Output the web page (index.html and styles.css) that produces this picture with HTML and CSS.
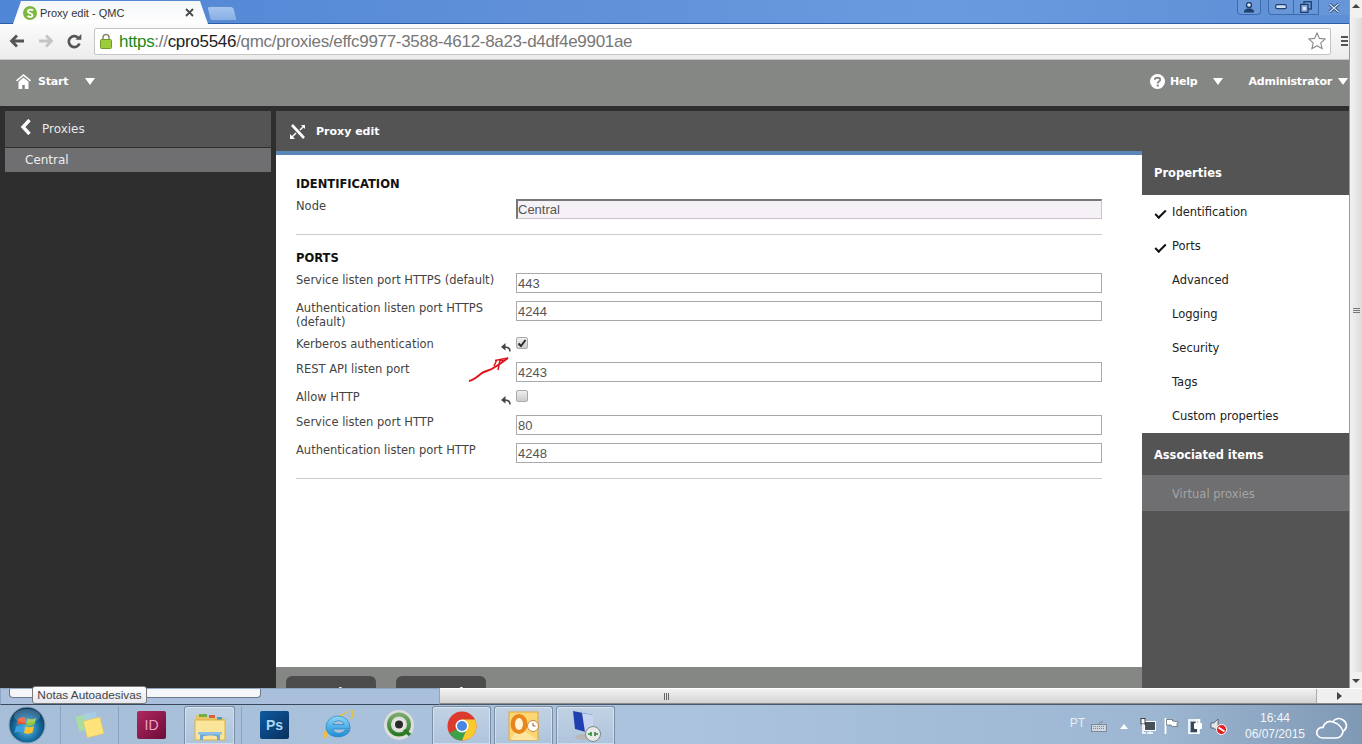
FILE: index.html
```html
<!DOCTYPE html>
<html lang="en">
<head>
<meta charset="utf-8">
<title>Proxy edit - QMC</title>
<link rel="stylesheet" href="styles.css">
</head>
<body>
<div class="upper">
  <div class="window">
    <div class="tabstrip">
      <div class="tab">
        <svg class="favicon" width="14" height="14" viewBox="0 0 14 14"><circle cx="7" cy="7" r="7" fill="#7cb83e"/><path d="M10 4.500C8.500 3 4.500 3.500 5 6c.4 1.500 4.500 1 4.500 3.200 0 2-3.500 2-5 .6" fill="none" stroke="#fff" stroke-width="1.800"/></svg>
        <span class="tab-title">Proxy edit - QMC</span>
        <svg class="tab-close" width="9" height="9" viewBox="0 0 9 9"><path d="M1 1l7 7M8 1L1 8" stroke="#4a4a4a" stroke-width="1.800"/></svg>
      </div>
      <div class="newtab"></div>
      <div class="winctl">
        <div class="winbtn user"><svg width="12" height="11" viewBox="0 0 12 11"><circle cx="6" cy="3" r="2.500" fill="#dce8f6" stroke="#1f3f6c" stroke-width="1.400"/><path d="M1 10.500h10V9C10 7 8 6.500 6 6.500S2 7 1 9z" fill="#1f3f6c"/></svg></div>
        <div class="winbtn min"><svg width="12" height="6" viewBox="0 0 12 6"><rect x=".7" y=".7" width="10.600" height="4" rx="1.500" fill="#cfe0f4" stroke="#1f3f6c" stroke-width="1.200"/></svg></div>
        <div class="winbtn rest"><svg width="12" height="12" viewBox="0 0 12 12"><rect x="4" y=".7" width="7.300" height="7.300" fill="none" stroke="#1f3f6c" stroke-width="1.300"/><rect x=".7" y="3.500" width="7.300" height="7.800" fill="#8fb0de" stroke="#1f3f6c" stroke-width="1.300"/><rect x="3" y="6" width="3" height="3" fill="#dce8f6"/></svg></div>
        <div class="winbtn close"><svg width="12" height="10" viewBox="0 0 12 10"><path d="M1.500 1l9 8M10.500 1l-9 8" stroke="#1f3f6c" stroke-width="3"/><path d="M1.500 1l9 8M10.500 1l-9 8" stroke="#dbe6f5" stroke-width="1.400"/></svg></div>
      </div>
    </div>
    <div class="toolbar">
      <svg class="nav" width="16" height="14" viewBox="0 0 16 14"><path d="M15 7H3M8 1.500L2.500 7 8 12.500" fill="none" stroke="#555" stroke-width="2.800"/></svg>
      <svg class="nav" width="16" height="14" viewBox="0 0 16 14"><path d="M1 7h12M8 1.500L13.500 7 8 12.500" fill="none" stroke="#c4c4c4" stroke-width="2.800"/></svg>
      <svg class="nav" width="15" height="15" viewBox="0 0 15 15"><path d="M12.500 9.500A5.500 5.500 0 1 1 11 3.500" fill="none" stroke="#555" stroke-width="2.600"/><path d="M8.500 5.800h5.800V0z" fill="#555"/></svg>
      <div class="omnibox">
        <svg class="lock" width="12" height="16" viewBox="0 0 12 16"><path d="M3 7V4.500a3 3 0 0 1 6 0V7" fill="none" stroke="#8a8a6c" stroke-width="1.500"/><rect x=".5" y="6.500" width="11" height="9" rx="1" fill="#9ccb3c" stroke="#6e9a28"/></svg>
        <span class="url"><span class="scheme">https</span><span class="dim">://</span>cpro5546<span class="dim">/qmc/proxies/effc9977-3588-4612-8a23-d4df4e9901ae</span></span>
        <svg class="star" width="18" height="18" viewBox="0 0 18 18"><path d="M9 1l2.400 5.400 5.800.6-4.400 3.900 1.300 5.800L9 13.700l-5.100 3 1.300-5.800L.8 7l5.800-.6z" fill="#fff" stroke="#8a8a8a" stroke-width="1.100"/></svg>
      </div>
      <div class="menu-bars"><i></i><i></i><i></i></div>
    </div>
    <header class="topbar">
      <svg class="home" width="15" height="15" viewBox="0 0 15 15"><path d="M7.500 0L0 6.200l1 1.200 6.500-5.300L14 7.400l1-1.200z" fill="#fff"/><path d="M7.500 3.600L2.500 7.700V15h3.700v-4h2.600v4h3.700V7.700z" fill="#fff"/></svg>
      <span class="top-label start">Start</span>
      <span class="caret caret-start"></span>
      <span class="spacer"></span>
      <svg class="help" width="15" height="15" viewBox="0 0 15 15"><circle cx="7.500" cy="7.500" r="7.500" fill="#fff"/><path d="M4.800 5.800C5 3 10.200 3 10.200 5.800c0 1.800-2.500 1.800-2.500 3.600" fill="none" stroke="#858784" stroke-width="1.900"/><rect x="6.700" y="10.600" width="2" height="2" fill="#858784"/></svg>
      <span class="top-label help-label">Help</span>
      <span class="caret caret-help"></span>
      <span class="top-label admin">Administrator</span>
      <span class="caret caret-admin"></span>
    </header>
    <div class="appbody">
      <aside class="left">
        <div class="left-head">
          <svg class="back-chevron" width="12" height="16" viewBox="0 0 12 16"><path d="M9.500 1L3 8l6.500 7" fill="none" stroke="#fff" stroke-width="3.400"/></svg>
          <span>Proxies</span>
        </div>
        <div class="left-item">Central</div>
      </aside>
      <main class="main">
        <div class="main-head">
          <svg width="16" height="15" viewBox="0 0 16 15"><path d="M2 1l12 13" stroke="#fff" stroke-width="2.600"/><path d="M10 6l4-4" stroke="#fff" stroke-width="1.400"/><path d="M11 1h4v4z" fill="#fff"/><path d="M6 9l-4 4" stroke="#fff" stroke-width="1.400"/><path d="M0 10l5 5H0z" fill="#fff"/></svg>
          <span>Proxy edit</span>
        </div>
        <div class="content">
          <div class="form">
            <h2 class="section">IDENTIFICATION</h2>
            <div class="row"><div class="lab">Node</div><div class="field readonly">Central</div></div>
            <hr class="rule rule-a">
            <h2 class="section">PORTS</h2>
            <div class="row"><div class="lab">Service listen port HTTPS (default)</div><div class="field">443</div></div>
            <div class="row tall"><div class="lab">Authentication listen port HTTPS (default)</div><div class="field">4244</div></div>
            <div class="row check-row"><div class="lab with-undo"><span>Kerberos authentication</span><svg class="undo" width="10" height="9" viewBox="0 0 10 9"><path d="M9 8.500C9 5 7 4 3.500 4" fill="none" stroke="#444" stroke-width="1.500"/><path d="M4.500 0L0 4l4.500 3.500z" fill="#444"/></svg></div><div class="box checked"><svg width="10" height="9" viewBox="0 0 10 9"><path d="M1.500 4.500L4 7l4.500-6" fill="none" stroke="#2c2c2c" stroke-width="2"/></svg></div></div>
            <div class="row"><div class="lab">REST API listen port</div><div class="field">4243</div></div>
            <div class="row check-row"><div class="lab with-undo"><span>Allow HTTP</span><svg class="undo" width="10" height="9" viewBox="0 0 10 9"><path d="M9 8.500C9 5 7 4 3.500 4" fill="none" stroke="#444" stroke-width="1.500"/><path d="M4.500 0L0 4l4.500 3.500z" fill="#444"/></svg></div><div class="box"></div></div>
            <div class="row"><div class="lab">Service listen port HTTP</div><div class="field">80</div></div>
            <div class="row"><div class="lab">Authentication listen port HTTP</div><div class="field">4248</div></div>
            <hr class="rule rule-b">
          </div>
          <svg class="redmark" width="44" height="32" viewBox="0 0 44 32"><path d="M1 29c5-1 9-5 13-8 4-2 9-3 13-6 5-3 9-6 13-9" fill="none" stroke="#e0141c" stroke-width="2"/><path d="M27 8.500L40 6M30 18l2-9.500M26 14l2.500-5.500M36 9l-4-1" fill="none" stroke="#e0141c" stroke-width="1.500"/></svg>
        </div>
        <div class="main-foot">
          <div class="foot-btn">Apply</div>
          <div class="foot-btn">Cancel</div>
        </div>
      </main>
      <aside class="right">
        <div class="right-title">Properties</div>
        <ul class="steps">
          <li class="done">Identification</li>
          <li class="done">Ports</li>
          <li>Advanced</li>
          <li>Logging</li>
          <li>Security</li>
          <li>Tags</li>
          <li>Custom properties</li>
        </ul>
        <div class="right-title assoc">Associated items</div>
        <div class="right-item">Virtual proxies</div>
      </aside>
    </div>
  </div>
  <div class="vscroll">
    <span class="arr up"></span>
    <div class="vthumb"><div class="vgrip"><i></i><i></i><i></i></div></div>
    <span class="arr down"></span>
  </div>
</div>
<div class="hscroll">
  <div class="hthumb"><div class="hgrip"><i></i><i></i><i></i></div></div>
  <span class="arr right-arr"></span>
</div>
<footer class="taskbar">
  <div class="orb">
    <svg width="38" height="38" viewBox="0 0 38 38"><defs><radialGradient id="o" cx=".5" cy=".6" r=".6"><stop offset="0" stop-color="#5ec0ea"/><stop offset=".6" stop-color="#14689c"/><stop offset="1" stop-color="#0a3558"/></radialGradient></defs><circle cx="19" cy="19" r="18" fill="url(#o)" stroke="#8fa5b8"/><path d="M10 13c3-2 5-2 8-1l-1.500 6.500c-3-1-5-1-8 .5z" fill="#e8532a"/><path d="M19.500 12.500c3 1 5.500 1 8.500-.5l-1.500 6.500c-3 1.500-5.500 1.500-8.500.5z" fill="#8fc63f"/><path d="M8 20.500c3-1.500 5-1.500 8-.5l-1.500 6.500c-3-1-5-1-8 .5z" fill="#3aa0e0"/><path d="M17.500 20.500c3 1 5.500 1 8.500-.5l-1.500 6.500c-3 1.500-5.500 1.500-8.500.5z" fill="#fbc02d"/><ellipse cx="19" cy="10" rx="13" ry="7" fill="#fff" opacity=".18"/></svg>
  </div>
  <div class="pin sep-l sticky">
    <svg width="32" height="30" viewBox="0 0 32 30"><rect x="3" y="5" width="14" height="15" transform="rotate(-15 10 12)" fill="#a8dca0"/><rect x="9" y="3" width="14" height="15" transform="rotate(-8 16 10)" fill="#a6cfe8" opacity=".8"/><rect x="11" y="9" width="17" height="17" transform="rotate(-14 19 17)" fill="#fde37a" stroke="#e9c44c" stroke-width=".5"/></svg>
  </div>
  <div class="pin sep-l indd"><span class="tile id">ID</span></div>
  <div class="pin active folder">
    <svg width="32" height="30" viewBox="0 0 32 30"><path d="M2 4h11l2 3h15v8H2z" fill="#e8c662"/><rect x="5" y="3" width="8" height="3" fill="#6fb04c"/><rect x="15" y="4" width="6" height="3" fill="#d8603c"/><rect x="23" y="6" width="5" height="3" fill="#4c9cc8"/><rect x="1" y="9" width="30" height="20" fill="#fbe59a" stroke="#d8b24c"/><path d="M6 29v-5c0-4 20-4 20 0v5h-3v-3c0-2-14-2-14 0v3z" fill="#6fa8d8"/><rect x="4" y="21" width="24" height="2.500" fill="#8cc0e8"/></svg>
  </div>
  <div class="pin sep-l ps"><span class="tile psd">Ps</span></div>
  <div class="pin ie">
    <svg width="32" height="32" viewBox="0 0 32 32"><defs><linearGradient id="ieg" x1="0" y1="0" x2="0" y2="1"><stop offset="0" stop-color="#8ed8f8"/><stop offset="1" stop-color="#1c8cd8"/></linearGradient></defs><path d="M3 30C-2 26 8 8 29 1 22 5 12 12 8 20c-2 4-3 8-5 10z" fill="#ecc23c"/><path d="M29 1c3 2 2 6 0 9" fill="none" stroke="#ecc23c" stroke-width="1.600"/><path d="M4 18a12 11 0 0 1 24 0v2H11c.5 5 9 6 12 1h5c-4 10-24 9-24-3zM11 15.500h11c-1-5-10-5-11 0z" fill="url(#ieg)" fill-rule="evenodd" stroke="#1478c0" stroke-width=".6"/></svg>
  </div>
  <div class="pin qlik">
    <svg width="32" height="32" viewBox="0 0 32 32"><defs><linearGradient id="qg" x1="0" y1="0" x2="0" y2="1"><stop offset="0" stop-color="#7aa86c"/><stop offset="1" stop-color="#2c7a28"/></linearGradient></defs><circle cx="16" cy="16" r="15" fill="#dcdedc"/><circle cx="16" cy="15.500" r="10" fill="none" stroke="url(#qg)" stroke-width="4"/><circle cx="16" cy="15.500" r="6" fill="#e8e8e0"/><circle cx="16" cy="15.500" r="4" fill="#2a2a2a"/><path d="M21 21l6 5" stroke="#2c7a28" stroke-width="3.500"/></svg>
  </div>
  <div class="pin active chrome">
    <svg width="30" height="30" viewBox="0 0 30 30"><circle cx="15" cy="15" r="14.500" fill="#dc3a2c"/><path d="M15 15L2.400 22.200A14.500 14.500 0 0 0 15 29.500L22 15z" fill="#3ba24a"/><path d="M15 8.500h13A14.500 14.500 0 0 1 15 29.500L21 15z" fill="#fbc92c"/><circle cx="15" cy="15" r="6.500" fill="#fff"/><circle cx="15" cy="15" r="5" fill="#4a86e0"/></svg>
  </div>
  <div class="pin active outlook">
    <svg width="32" height="30" viewBox="0 0 32 30"><rect x="1" y="1" width="29" height="28" fill="#fbd672" stroke="#e0a63c"/><path d="M10 16l20 13H3z" fill="#fde6a0"/><ellipse cx="11" cy="13" rx="8.500" ry="10" fill="#e8861c"/><ellipse cx="11" cy="13" rx="4" ry="6" fill="#fff3d8"/><circle cx="25" cy="15" r="5.500" fill="#fff" stroke="#c88a3c"/><path d="M25 12v3h2.500" fill="none" stroke="#a06020"/></svg>
  </div>
  <div class="pin active rdp">
    <svg width="32" height="32" viewBox="0 0 32 32"><path d="M3 1l20 4v19L5 19z" fill="#2040b0"/><path d="M12 3l11 2v19l-8-2z" fill="#c8d4f0"/><ellipse cx="14" cy="27" rx="9" ry="3" fill="#b8b8b8"/><circle cx="23" cy="24" r="7.500" fill="#e8e8e8" stroke="#7a8a80"/><path d="M18 24h3M21 22v4M28 24h-3M25 22v4" stroke="#2a8a3c" stroke-width="1.600"/></svg>
  </div>
  <div class="tray">
    <span class="lang">PT</span>
    <svg class="kbd" width="16" height="11" viewBox="0 0 16 11"><path d="M8 3c0-2 3-1 4-3" fill="none" stroke="#7a8a9a"/><rect x=".5" y="3.500" width="15" height="7" fill="#cfd8e2" stroke="#7a8a9a"/><path d="M2 5.500h12M2 7.500h12" stroke="#7a8a9a" stroke-dasharray="1 1"/></svg>
    <svg class="chev" width="8" height="5" viewBox="0 0 8 5"><path d="M4 0l4 5H0z" fill="#fff"/></svg>
    <svg class="ti net" width="16" height="16" viewBox="0 0 16 16"><rect x="4.500" y="3.500" width="11" height="9" fill="#48505a" stroke="#fff"/><path d="M7 15h6" stroke="#fff" stroke-width="1.500"/><path d="M10 13v2" stroke="#fff"/><rect x="1" y=".5" width="4" height="5.500" fill="#fff" stroke="#222" stroke-width=".8"/><path d="M3 6v9h3" fill="none" stroke="#fff" stroke-width="1.600"/></svg>
    <svg class="ti flag" width="16" height="16" viewBox="0 0 16 16"><path d="M1.500 0v16" stroke="#fff" stroke-width="1.800"/><path d="M2.500 1.500h6v1.500l6 1-2 2.500 1.500 2H8L7 7H2.500z" fill="#fff" stroke="#333" stroke-width=".5"/></svg>
    <svg class="ti power" width="15" height="16" viewBox="0 0 15 16"><rect x="1" y="2" width="10" height="13.500" fill="none" stroke="#fff" stroke-width="1.600"/><rect x="3" y="4" width="6" height="10" fill="#3a4654"/><rect x="6" y="5" width="8" height="6" rx="1" fill="#fff"/><path d="M8.500 1v4M11.500 1v4M10 11v4" stroke="#fff" stroke-width="1.500"/></svg>
    <svg class="ti speaker" width="17" height="17" viewBox="0 0 17 17"><path d="M1 5h3l4-4v13L4 10H1z" fill="#e6e6e6" stroke="#445" stroke-width=".7"/><circle cx="11.500" cy="11.500" r="5" fill="#e02020" stroke="#fff"/><path d="M8.500 9.500l6 4" stroke="#fff" stroke-width="1.800"/></svg>
    <div class="clock"><span>16:44</span><span>06/07/2015</span></div>
    <svg class="cloud" width="32" height="22" viewBox="0 0 32 22"><path d="M7 21C2 21 0 17 1 14c1-3 4-4 6-3.500C8 6 13 3 17 5c1-3 6-5 10-2 3 2 4 5 3 8-1 2-2 3-3 3 0 4-3 7-7 7z" fill="none" stroke="#fff" stroke-width="1.700"/><path d="M17 5c4 1 8 4 10 9" fill="none" stroke="#fff" stroke-width="1.300"/></svg>
  </div>
</footer>
<div class="dock-panel"><div class="dock-inner"></div></div>
<div class="tooltip">Notas Autoadesivas</div>
</body>
</html>
```

FILE: styles.css
```css
* { box-sizing: border-box; }
html, body { margin: 0; padding: 0; }
body {
  width: 1362px; height: 744px; overflow: hidden; position: relative;
  display: flex; flex-direction: column;
  font-family: "DejaVu Sans", sans-serif; font-size: 12px; color: #333; background: #fff;
}
.upper { display: flex; height: 688px; flex: none; }
.window { width: 1349px; display: flex; flex-direction: column; flex: none; }

/* tab strip */
.tabstrip {
  height: 24px; flex: none; display: flex; align-items: flex-end; padding-left: 13px;
  background: linear-gradient(90deg, #4f86d6, #5f90d8 40%, #6a9ade 70%, #5d8fd6);
  border-bottom: 1px solid #2c5ea6;
}
.tab {
  width: 195px; height: 23px; background: linear-gradient(#f4f6f8, #fff);
  clip-path: polygon(0 100%, 8px 0, 187px 0, 195px 100%);
  display: flex; align-items: center; padding: 0 14px 0 10px; flex: none; margin-bottom: -1px;
}
.favicon { margin-right: 3px; }
.tab-title { font: 11px "Liberation Sans", sans-serif; color: #333; flex: 1; white-space: nowrap; }
.tab-close { flex: none; }
.newtab {
  width: 28px; height: 15px; margin: 0 0 2px 0; border-radius: 3px 4px 2px 2px; transform: skewX(14deg);
  background: linear-gradient(#a4c4ee, #88afe6); border: 1px solid #5c8ccc;
}
.winctl { margin-left: auto; align-self: flex-start; display: flex; height: 15px; }
.winbtn { display: flex; align-items: center; justify-content: center; height: 15px; border: 1px solid #3c6cae; border-top: 0; width: 25px; background: rgba(255,255,255,.06); }
.winbtn.user { width: 24px; margin-right: 7px; border-radius: 0 0 4px 4px; }
.winbtn.min { border-radius: 0 0 0 4px; border-right: 0; }
.winbtn.rest { border-right: 0; }
.winbtn.close { width: 31px; border: 0; border-left: 1px solid #3c6cae; }

/* toolbar */
.toolbar {
  height: 36px; flex: none; display: flex; align-items: center; padding: 0 0 1px 9px;
  background: linear-gradient(#fbfbfb, #ececec); border-bottom: 1px solid #c8c8c8;
}
.nav { flex: none; margin-right: 13px; }
.omnibox {
  width: 1237px; height: 27px; margin-left: -1px; display: flex; align-items: center; padding: 0 4px 0 5px;
  background: #fff; border: 1px solid #c4c4c4; border-radius: 2px;
}
.lock { flex: none; margin-right: 7px; }
.url { flex: 1; font: 17px/1 "Liberation Sans", sans-serif; letter-spacing: -.3px; color: #222; white-space: nowrap; }
.scheme { color: #1a8a1a; }
.dim { color: #777; }
.star { flex: none; }
.menu-bars { width: 7px; margin-left: 10px; display: flex; flex-direction: column; gap: 2px; flex: none; }
.menu-bars i { display: block; height: 2px; background: #555; }

/* app header */
.topbar {
  height: 46px; flex: none; background: #858784; display: flex; align-items: center; padding: 0 1px 3px 16px;
  color: #fff;
}
.top-label { font-weight: 700; font-size: 11px; letter-spacing: -.2px; white-space: nowrap; }
.home { flex: none; }
.start { margin-left: 7px; }
.spacer { flex: 1; }
.caret { width: 0; height: 0; border: 5.500px solid transparent; border-top: 7px solid #fff; border-bottom: 0; flex: none; }
.caret-start { margin-left: 17px; }
.help-label { margin-left: 5px; }
.caret-help { margin-left: 16px; }
.admin { margin-left: 25px; }
.caret-admin { margin-left: 6px; }

.appbody { flex: 1; display: flex; background: #2e2e2e; padding-top: 5px; min-height: 0; }

/* left */
.left { width: 276px; flex: none; padding: 0 5px; }
.left-head {
  height: 37px; background: #545454; color: #e8e8e8; display: flex; align-items: center; padding: 0 0 0 15px;
  border-bottom: 1px solid #2e2e2e; font-size: 12px;
}
.back-chevron { margin: -4px 10px 0 0; }
.left-item { height: 24px; background: #6f6f71; color: #eee; line-height: 25px; padding-left: 20px; }

/* main */
.main { width: 866px; flex: none; display: flex; flex-direction: column; }
.main-head {
  height: 44px; flex: none; background: #545454; border-bottom: 4px solid #5b86b8; color: #fff;
  display: flex; align-items: center; padding-left: 14px; font-weight: 700; font-size: 11px;
}
.main-head svg { margin-right: 10px; }
.content { flex: 1; background: #fff; position: relative; padding: 21px 40px 0 20px; min-height: 0; }
.section { margin: 0 0 7px; font-size: 11.500px; line-height: 16px; height: 16px; color: #111; font-weight: 700; }
.row { display: flex; margin-bottom: 8px; height: 20px; }
.row.tall { height: 28px; }
.row.check-row { height: 17px; }
.lab { width: 220px; flex: none; line-height: 14px; padding-right: 20px; color: #444; font-size: 11.500px; }
.with-undo { display: flex; justify-content: space-between; padding-right: 5px; }
.undo { margin-top: 6px; flex: none; }
.field {
  flex: 1; height: 20px; border: 1px solid #aaa; background: #fff; color: #555; padding: 1px 0 0 1px;
  font: 13px/17px "Liberation Sans", sans-serif;
}
.field.readonly { background: #f6f1f6; border: 1px solid #c8c4c8; border-top: 2px solid #777; border-left: 2px solid #777; padding: 0; }
.box {
  width: 12px; height: 12px; border: 1px solid #aaa; border-radius: 2px;
  background: linear-gradient(#eee, #ccc); display: flex; align-items: center; justify-content: center;
}
.rule { border: 0; border-top: 1px solid #ccc; margin: 0; }
.rule-a { margin: 15px 0 15px; }
.rule-b { margin-top: 15px; }
.redmark { position: absolute; left: 192px; top: 197px; }

.main-foot { height: 21px; flex: none; background: #858784; display: flex; gap: 20px; padding: 9px 0 0 10px; overflow: hidden; }
.foot-btn { width: 90px; height: 34px; flex: none; background: #4c4c4c; border-radius: 6px 6px 0 0; color: #fff; text-align: center; font-weight: 700; padding-top: 10px; }

/* right */
.right { flex: 1; background: #545454; }
.right-title { height: 84px; color: #fff; font-weight: 700; font-size: 11.500px; padding: 54px 0 0 12px; line-height: 16px; }
.right-title.assoc { height: 42px; padding-top: 14px; font-size: 11.400px; }
.steps { list-style: none; margin: 0; padding: 0; background: #fff; height: 238px; }
.steps li { height: 34px; line-height: 35px; padding-left: 30px; color: #222; position: relative; font-size: 11.500px; }
.steps li.done::before {
  content: ""; position: absolute; left: 13px; top: 15px; width: 9px; height: 4px;
  border-left: 2px solid #111; border-bottom: 2px solid #111; transform: rotate(-45deg);
}
.right-item { height: 36px; background: #6f6f71; color: #a4a4a4; line-height: 38px; padding-left: 30px; font-size: 11.500px; }

/* scrollbars */
.vscroll { width: 13px; flex: none; background: #f0f0f0; display: flex; flex-direction: column; align-items: center; border-left: 1px solid #9a9a9a; position: relative; }
.vthumb { flex: 1; width: 100%; margin: 18px 0 16px; background: linear-gradient(90deg, #f2f2f2, #dcdcdc); display: flex; align-items: center; justify-content: center; padding-bottom: 70px; }
.vgrip { display: flex; flex-direction: column; gap: 1px; width: 7px; }
.vgrip i { height: 1px; background: #777; display: block; }
.arr { position: absolute; width: 0; height: 0; border: 4px solid transparent; }
.arr.up { top: 4px; left: 2px; border-bottom: 4px solid #444; border-top: 0; }
.arr.down { bottom: 5px; left: 2px; border-top: 4px solid #444; border-bottom: 0; }
.hscroll { height: 16px; flex: none; background: #f0f0f0; position: relative; border-top: 1px solid #fff; border-bottom: 1px solid #8a8a8a; display: flex; }
.hthumb { width: 1317px; height: 14px; background: linear-gradient(#f2f2f2, #d4d4d4); border-right: 1px solid #aaa; display: flex; align-items: center; justify-content: flex-end; padding-right: 647px; }
.hgrip { display: flex; gap: 1px; height: 7px; }
.hgrip i { width: 1px; background: #666; display: block; }
.arr.right-arr { top: 3px; left: 1337px; border-left: 5px solid #444; border-right: 0; }

/* taskbar */
.taskbar {
  height: 40px; flex: none; display: flex; align-items: stretch; padding-top: 1px; position: relative;
  background: linear-gradient(90deg, #a6bed8, #abc3dc 50%, #9db6d2 85%, #7f99b4);
  border-top: 1px solid #4a5a6c;
}
.orb { width: 60px; flex: none; display: flex; align-items: center; padding-left: 8px; }
.pin { display: flex; align-items: center; justify-content: center; flex: none; }
.sep-l { border-left: 1px solid rgba(100,120,150,.4); }
.sticky { width: 58px; }
.indd { width: 66px; }
.active {
  border: 1px solid #7a8ea6; border-bottom: 0; border-radius: 3px 3px 0 0;
  background: linear-gradient(#c2d2e4, #aec4dc);
  box-shadow: inset 0 0 0 1px rgba(255,255,255,.4);
}
.folder { width: 51px; }
.ps { width: 66px; margin-left: 6px; }
.ie { width: 62px; }
.qlik { width: 60px; }
.chrome { width: 59px; margin: 0 3px; }
.outlook { width: 59px; margin-right: 3px; }
.rdp { width: 59px; }
.tile { width: 29px; height: 28px; display: flex; align-items: center; justify-content: center; font: 700 14px "Liberation Sans", sans-serif; border-radius: 2px; }
.tile.id { background: linear-gradient(135deg, #b02860, #6c0c38); color: #f0a0c0; font-weight: 400; }
.tile.psd { background: linear-gradient(135deg, #0e5aa0, #08305e); color: #a8d8f8; }
.tray { margin-left: auto; display: flex; align-items: center; color: #fff; padding-right: 14px; }
.lang { font: 12px "Liberation Sans", sans-serif; color: #e8eef4; margin: 0 6px 5px 0; }
.kbd { margin: 3px 13px 0 0; }
.chev { margin: 3px 0 0; }
.ti { margin: 2px 0 0 8px; }
.net { margin-left: 12px; }
.speaker { margin-left: 7px; }
.clock { display: flex; flex-direction: column; align-items: center; width: 60px; margin: 2px 0 0 18px; font: 12px/16px "Liberation Sans", sans-serif; color: #f2f6fa; }
.cloud { margin: 5px 0 0 11px; }

/* overlays */
.dock-panel {
  position: absolute; left: 0; top: 688px; width: 440px; height: 17px;
  background: #a9bfdb; border: 1px solid #8fa6c2; border-bottom: 1px solid #39485a;
  padding: 0 8px;
}
.dock-inner { width: 252px; height: 9px; background: #f4f6fa; border: 1px solid #6a7a8c; border-top: 0; border-radius: 0 0 4px 4px; }
.tooltip {
  position: absolute; left: 32px; top: 686px; width: 115px; height: 18px;
  background: linear-gradient(#fff, #e6e8f0); border: 1px solid #7a7a7a; border-radius: 3px;
  font: 11.800px/16px "Liberation Sans", sans-serif; color: #444; text-align: center; white-space: nowrap;
}
```
